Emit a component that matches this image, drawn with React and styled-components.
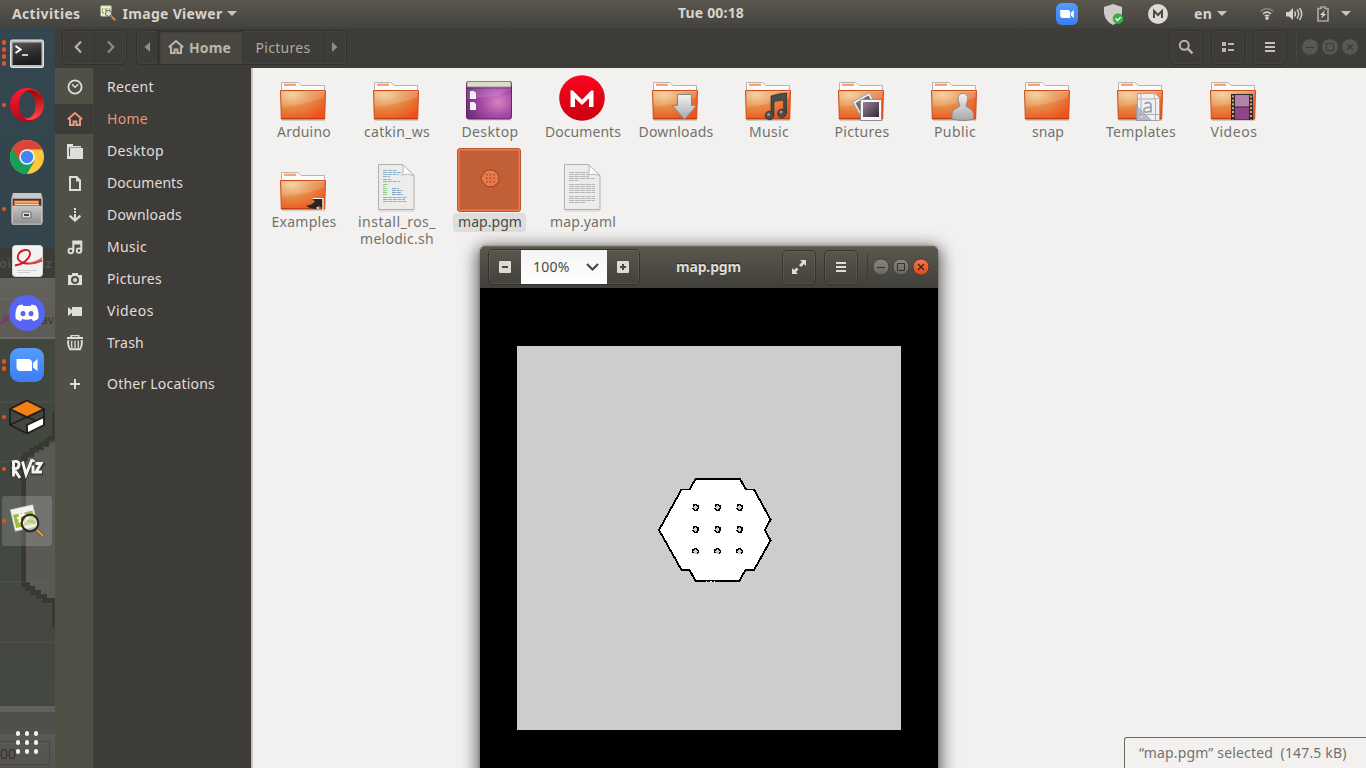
import React from "react";
import styled, { createGlobalStyle, css } from "styled-components";

const FAMILY = '"Noto Sans", "Open Sans", sans-serif';

const Global = createGlobalStyle`
  * { box-sizing: border-box; }
  body { margin: 0; overflow: hidden; font-family: ${FAMILY}; font-size: 14px; }
  svg { display: block; flex: none; }
`;

/* ---------- text with a measured advance ---------- */

const TextSpan = styled.span`
  white-space: pre;
  font-weight: ${(p) => (p.$bold ? 700 : 400)};
`;

const pen = document.createElement("canvas").getContext("2d");
function Text({ children, width, bold, size = 14 }) {
  pen.font = `${bold ? 700 : 400} ${size}px ${FAMILY}`;
  const spacing = (width - pen.measureText(children).width) / children.length;
  return (
    <TextSpan $bold={bold} style={{ letterSpacing: `${spacing.toFixed(3)}px` }}>
      {children}
    </TextSpan>
  );
}

/* ---------- shell ---------- */

const Desktop = styled.div`
  position: relative;
  width: 1366px;
  height: 768px;
  overflow: hidden;
  display: flex;
  flex-direction: column;
  background: #3c3b37;
`;

const TopBar = styled.header`
  height: 27px;
  flex: none;
  display: grid;
  grid-template-columns: 1fr auto 1fr;
  align-items: center;
  padding: 0 15px 0 12px;
  color: #d6d3cc;
  line-height: 26px;
  background: linear-gradient(#5a574e, #44433e);
`;

const Clock = styled.div`
  margin-left: 59px;
  padding-bottom: 1px;
  line-height: 26px;
`;

const BarGroup = styled.div`
  display: flex;
  align-items: center;
  height: 27px;
  justify-content: ${(p) => (p.$end ? "flex-end" : "flex-start")};
`;

const Space = styled.span`
  flex: none;
  width: ${(p) => p.$w}px;
`;

const Main = styled.div`
  flex: 1;
  min-height: 0;
  display: flex;
`;

/* ---------- dock ---------- */

const Dock = styled.nav`
  position: relative;
  width: 55px;
  flex: none;
  display: flex;
  flex-direction: column;
  justify-content: space-between;
  padding-top: 1px;
  overflow: hidden;
  background: linear-gradient(
    #34464f 0, #33444c 221px, #3c3b37 221px, #3c3b37 251px,
    #63625c 251px, #5c5b56 310px, #6a6963 310px, #6a6963 312px,
    #41463f 312px, #444841 679px, #62615c 679px, #62615c 685px,
    #504f4b 685px, #504f4b 707px, #5a5955 707px, #53524e 741px
  );
`;

const Backdrop = styled.svg`
  position: absolute;
  left: 0;
  top: 0;
`;

const Ghost = styled.span`
  position: absolute;
  left: ${(p) => p.$x}px;
  top: ${(p) => p.$y}px;
  font-size: ${(p) => p.$size || 13}px;
  font-weight: ${(p) => (p.$bold ? 700 : 400)};
  line-height: 18px;
  color: ${(p) => p.$color};
  white-space: pre;
`;

const DockList = styled.div`
  display: flex;
  flex-direction: column;
  gap: 2px;
  padding-left: 2px;
`;

const DockItem = styled.div`
  position: relative;
  width: 50px;
  height: 50px;
  display: flex;
  align-items: center;
  justify-content: center;
  border-radius: 3px;
  background: ${(p) => (p.$active ? "rgba(255,255,255,0.16)" : "transparent")};
`;

const Dots = styled.div`
  position: absolute;
  left: 0;
  top: 0;
  height: 50px;
  display: flex;
  flex-direction: column;
  justify-content: center;
  gap: 2.6px;
`;

const Dot = styled.i`
  width: 4.4px;
  height: 4.4px;
  border-radius: 50%;
  background: #e95420;
`;

const AppsButton = styled.div`
  position: relative;
  display: grid;
  grid-template-columns: repeat(3, 4.6px);
  gap: 4.4px;
  padding: 0 0 14px 15.6px;
`;

const AppsDot = styled.i`
  width: 4.6px;
  height: 4.6px;
  border-radius: 50%;
  background: #f4f3f1;
`;

/* ---------- file manager ---------- */

const Files = styled.section`
  flex: 1;
  display: flex;
  flex-direction: column;
  min-width: 0;
`;

const FilesHeader = styled.div`
  height: 41px;
  flex: none;
  display: flex;
  align-items: center;
  padding: 0 7px 2px;
  color: #aeaba1;
  background: #3d3c38;
  border-top: 1px solid #43423e;
`;

const ButtonGroup = styled.div`
  display: flex;
  height: 35px;
  border: 1px solid #31302d;
  border-radius: 5px;
  box-shadow: inset 0 0 0 1px #454440;
  overflow: hidden;
  margin-left: ${(p) => p.$gap || 0}px;
`;

const HeadCell = styled.div`
  width: ${(p) => p.$w}px;
  display: flex;
  align-items: center;
  justify-content: center;
  gap: 5px;
  padding-right: ${(p) => p.$nudge || 0}px;
  border-right: 1px solid #363531;
  &:last-child { border-right: 0; }
  ${(p) =>
    p.$pressed &&
    css`
      background: #484741;
      box-shadow: inset 2px 1px 2px #32312e;
      color: #b9b6ac;
    `}
`;

const Filler = styled.div`
  flex: 1;
`;

const Rule = styled.i`
  width: 1px;
  height: 28px;
  margin: 0 ${(p) => p.$r}px 0 ${(p) => p.$l}px;
  background: ${(p) => p.$color};
`;

const WindowButtons = styled.div`
  display: flex;
  gap: 2px;
`;

const FilesBody = styled.div`
  flex: 1;
  min-height: 0;
  display: flex;
`;

const Sidebar = styled.aside`
  width: 196px;
  flex: none;
  padding-top: 3px;
  color: #e0deda;
  background: linear-gradient(90deg, #505047 38px, #48483f 38px, #3e3c38 39px);
`;

const Place = styled.div`
  height: 32px;
  display: flex;
  align-items: center;
  margin-top: ${(p) => (p.$apart ? 9 : 0)}px;
  color: ${(p) => (p.$active ? "#e9967a" : "inherit")};
`;

const PlaceIcon = styled.div`
  width: 38px;
  height: 30px;
  margin-right: 14px;
  display: flex;
  align-items: center;
  justify-content: center;
  padding: 0 0 1px 2px;
  background: ${(p) => (p.$active ? "#3e3c38" : "transparent")};
`;

const PlaceName = styled.div`
  padding-bottom: 2px;
`;

const Content = styled.main`
  position: relative;
  flex: 1;
  border-left: 2px solid #c9c6c2;
  padding: 4px 0 0 4px;
  background: #f2f1ef;
`;

const IconRow = styled.div`
  display: flex;
  height: ${(p) => p.$h}px;
`;

const FileItem = styled.div`
  width: 93px;
  flex: none;
  display: flex;
  flex-direction: column;
  align-items: center;
  color: #73716e;
`;

const Thumb = styled.div`
  height: ${(p) => p.$h}px;
  display: flex;
  align-items: flex-end;
`;

const Label = styled.div`
  margin-top: 1px;
  padding: 0 4px 0 5px;
  line-height: 17px;
  display: flex;
  flex-direction: column;
  align-items: center;
  border-radius: 4px;
  ${(p) =>
    p.$selected &&
    css`
      color: #4b4a47;
      background: #dededc;
      padding-bottom: 2px;
    `}
`;

const StatusBar = styled.div`
  position: absolute;
  right: 0;
  bottom: 0;
  width: 242px;
  height: 31px;
  padding: 0 0 0 14px;
  line-height: 30px;
  color: #73716e;
  background: #f2f1ef;
  border: solid #6d6b68;
  border-width: 1px 0 0 1px;
  border-radius: 3px 0 0 0;
`;

/* ---------- image viewer ---------- */

const Viewer = styled.section`
  position: absolute;
  left: 480px;
  top: 246px;
  width: 458px;
  height: 530px;
  border-radius: 6px 6px 0 0;
  background: #000;
  box-shadow: 0 4px 16px 4px rgba(0, 0, 0, 0.55), 0 0 3px rgba(0, 0, 0, 0.35);
`;

const ViewerHeader = styled.div`
  height: 42px;
  display: grid;
  grid-template-columns: 1fr auto 1fr;
  align-items: center;
  padding: 0 8px;
  color: #dfdbd2;
  border-radius: 6px 6px 0 0;
  background: linear-gradient(#5b584e, #403f3a);
  box-shadow: inset 0 1px #6d6a60;
`;

const HeaderSide = styled.div`
  display: flex;
  align-items: center;
  justify-content: ${(p) => (p.$end ? "flex-end" : "flex-start")};
`;

const ZoomGroup = styled.div`
  display: flex;
  width: 152px;
  height: 36px;
  border: 1px solid #33322e;
  border-radius: 5px;
  box-shadow: inset 0 0 0 1px rgba(255, 255, 255, 0.08);
`;

const ZoomStep = styled.div`
  width: ${(p) => p.$w}px;
  flex: none;
  display: flex;
  align-items: center;
  justify-content: center;
`;

const ZoomValue = styled.div`
  flex: 1;
  display: flex;
  align-items: center;
  gap: 16px;
  padding: 0 0 1px 12px;
  color: #4a4946;
  background: linear-gradient(#f4f4f3, #fff);
`;

const HeaderButton = styled.div`
  width: 34px;
  height: 35px;
  margin-right: ${(p) => p.$gap}px;
  display: flex;
  align-items: center;
  justify-content: center;
  border: 1px solid ${(p) => (p.$dim ? "#32312e" : "#35342f")};
  border-radius: 5px;
  box-shadow: inset 0 0 0 1px rgba(255, 255, 255, ${(p) => (p.$dim ? 0.04 : 0.07)});
`;

const Title = styled.div`
  padding: 0 1px 2px 0;
  text-shadow: 0 -1px 1px rgba(0, 0, 0, 0.6);
`;

const Canvas = styled.div`
  padding: 58px 0 0 37px;
`;

/* ---------- small glyphs ---------- */

const Caret = ({ w = 10, h = 5 }) => (
  <svg width={w} height={h} viewBox="0 0 10 5"><path d="M0 0h10L5 5z" fill="#c9c6bf" /></svg>
);

const HouseGlyph = ({ size = 16 }) => (
  <svg width={size} height={size} viewBox="0 0 16 16" fill="none" stroke="currentColor">
    <path d="M.8 8.2 8 2l7.2 6.2" strokeWidth="2" />
    <path d="M3 7.5V14h3.6v-3.6h2.8V14H13V7.5" strokeWidth="2" />
  </svg>
);

const SearchGlyph = () => (
  <svg width="16" height="16" viewBox="0 0 16 16" fill="none" stroke="#bbb8ac" strokeWidth="2">
    <circle cx="6.3" cy="6.3" r="4.5" /><path d="m9.7 9.7 4.8 4.6" strokeWidth="2.4" />
  </svg>
);

const ListGlyph = () => (
  <svg width="14" height="12" viewBox="0 0 14 12" fill="#bbb8ac">
    <path d="M1 1h4v4H1zM1 7h4v4H1zM7 2h6v2H7zM7 8h6v2H7z" />
  </svg>
);

const MenuGlyph = ({ color }) => (
  <svg width="10" height="10" viewBox="0 0 10 10" fill={color}>
    <path d="M0 0h10v2H0zM0 4h10v2H0zM0 8h10v2H0z" />
  </svg>
);

const Chevron = ({ flip, color }) => (
  <svg width="8" height="14" viewBox="0 0 8 14" fill="none" stroke={color} strokeWidth="2.2">
    <path d={flip ? "m1 1.5 5.2 5.5L1 12.5" : "M7 1.5 1.8 7 7 12.5"} />
  </svg>
);

const SmallArrow = ({ flip }) => (
  <svg width="6" height="10" viewBox="0 0 6 10" fill="#8f8d85">
    <path d={flip ? "M0 0v10l5.5-5z" : "M6 0v10L.5 5z"} />
  </svg>
);

const RoundButton = ({ kind, tone }) => {
  const palette = {
    dim: ["#5a5954", "#565550", "#3c3b37", "#494843"],
    normal: ["#8a8880", "#66645e", "#33322e", "#3a3935"],
    close: ["#f4794e", "#dd4a1b", "#3e1f12", "#4a3228"],
  }[tone];
  const id = `round-${kind}-${tone}`;
  return (
    <svg width="18" height="18" viewBox="0 0 18 18" fill="none">
      <linearGradient id={id} x2="0" y2="1"><stop stopColor={palette[0]} /><stop offset="1" stopColor={palette[1]} /></linearGradient>
      <circle cx="9" cy="9" r="8" fill={`url(#${id})`} stroke={palette[3]} strokeWidth="0.8" />
      {kind === "min" && <path d="M5 9.5h8" stroke={palette[2]} />}
      {kind === "max" && <path d="M5.5 5.5h7v7h-7z" stroke={palette[2]} />}
      {kind === "close" && <path d="m6 6 6 6m0-6-6 6" stroke={palette[2]} strokeWidth="1.3" />}
    </svg>
  );
};

const placeGlyphs = {
  recent: (
    <><circle cx="8" cy="8" r="6.6" fill="none" stroke="currentColor" strokeWidth="1.8" />
      <path d="m5 5.2 3 3 3.3-3" fill="none" stroke="currentColor" strokeWidth="1.4" /></>
  ),
  desktop: <path d="M0 1h6v2h8v1.4H2V15H0zM3 5h13v11H3z M0 13h3v3H0z" />,
  documents: <path fillRule="evenodd" d="M2 1h8l4 4v11H2zM4 3v11h8V6.6H9V3z" />,
  downloads: (
    <><path d="M7 1h2v2H7zM7 4h2v2H7zM7 7h2v6H7z" />
      <path d="m2.600 8.600 5.400 5 5.400-5" fill="none" stroke="currentColor" strokeWidth="2.200" /></>
  ),
  music: (
    <><path d="M6.300 12.400V2.500h8v9" fill="none" stroke="currentColor" strokeWidth="2" /><path d="M6 2h9v3.500H6z" />
      <circle cx="3.800" cy="12" r="2.300" fill="none" stroke="currentColor" strokeWidth="1.800" />
      <circle cx="12" cy="11.600" r="2.300" fill="none" stroke="currentColor" strokeWidth="1.800" /></>
  ),
  pictures: <path fillRule="evenodd" d="M5 2h6v2h4v10H1V4h4zM8 5a4 4 0 1 0 0 8 4 4 0 0 0 0-8zm0 2a2 2 0 1 1 0 4 2 2 0 0 1 0-4z" />,
  videos: <path d="M6 4h9v9H5V9.800L1 13V4l4 3.200V4z" />,
  trash: (
    <><path d="M3.500 0h9v2H16v2H0V2h3.500zM5 1.200V2h6v-.8z" fillRule="evenodd" />
      <path d="M1.500 5q-1.200 5 1.500 9.200h10q2.700-4.200 1.500-9.200" fill="none" stroke="currentColor" strokeWidth="1.900" />
      <path d="M5 5.500q-1 3.700 0 7.500M8 5.500v7.500M11 5.500q1 3.700 0 7.500" fill="none" stroke="currentColor" strokeWidth="1.300" /></>
  ),
  other: <path d="M7 3h2v4h4v2H9v4H7V9H3V7h4z" />,
};

const PlaceGlyph = ({ kind }) =>
  kind === "home" ? <HouseGlyph /> : (
    <svg width="16" height="16" viewBox="0 0 16 16" fill="currentColor">{placeGlyphs[kind]}</svg>
  );

/* ---------- application icons ---------- */

const ViewerIcon = ({ size }) => (
  <svg width={size} height={size} viewBox="0 0 36 36">
    <g transform="rotate(-13 15 15)">
      <rect x="3.500" y="4" width="23" height="22" fill="#f4f4ee" stroke="#c9c9bd" strokeWidth=".5" />
      <rect x="5" y="9.500" width="20" height="13.500" fill="#9dbb3f" />
      <circle cx="14" cy="15" r="4.500" fill="#fff" strokeDasharray="2 1.500" stroke="#fff" strokeWidth="3" />
      <circle cx="14" cy="15.500" r="2.500" fill="#e98a15" />
    </g>
    <path d="m28 27 6 6" stroke="#6b4a1a" strokeWidth="3.600" /><path d="m28 27 6 6" stroke="#e0a04c" strokeWidth="2" />
    <circle cx="21" cy="20" r="8.300" fill="#eef0e4" fillOpacity=".62" stroke="#2b2c2c" strokeWidth="2.200" />
    <path d="M15 20q4-5 12-2l-1 4q-4-4-11-2z" fill="#a8c154" opacity=".6" />
  </svg>
);

const TrayViewerIcon = () => (
  <svg width="17" height="17" viewBox="0 0 17 17">
    <path d="M1 1h10v10H1z" fill="#eceee2" stroke="#d9dbcd" /><path d="M2 3.500h8v5H2z" fill="#9ab043" />
    <path d="M3 4h2v2h2V4h2v3H7v1H4V7H3z" fill="#f6f6ee" />
    <path d="m12 12 3.500 3.500" stroke="#8d6422" strokeWidth="2.600" /><path d="m11.500 11.500 3.500 3.500" stroke="#d79c3b" strokeWidth="1.200" />
    <circle cx="8.500" cy="8.300" r="3" fill="#e9ecd6" fillOpacity=".7" stroke="#4a4d45" strokeWidth=".9" />
  </svg>
);

const ZoomIcon = ({ size }) => (
  <svg width={size} height={size} viewBox="0 0 34 34">
    <linearGradient id={`zoom${size}`} x2="0" y2="1"><stop stopColor="#559cfb" /><stop offset="1" stopColor="#3d7df3" /></linearGradient>
    <rect width="34" height="34" rx="9" fill={`url(#zoom${size})`} />
    <path d="M6.500 11h11.500q4 0 4 4v8H10.500q-4 0-4-4z" fill="#fff" />
    <path d="m23 15 4.500-4v12L23 19.500z" fill="#fff" />
  </svg>
);

const dockIcons = {
  terminal: (
    <svg width="36" height="36" viewBox="0 0 36 36">
      <linearGradient id="term" x2=".3" y2="1"><stop stopColor="#5b5b5b" /><stop offset=".5" stopColor="#333" /><stop offset="1" stopColor="#1c1c1c" /></linearGradient>
      <g transform="translate(0 2)">
        <rect x="1.500" y="3" width="33" height="27.500" rx="1.500" fill="#bdbdbd" stroke="#e4e4e4" />
        <rect x="3.500" y="5.500" width="29" height="22.500" fill="url(#term)" />
        <path d="m6.500 9 5 3.500-5 3.500" fill="none" stroke="#fff" strokeWidth="2" /><path d="M13 18h6" stroke="#eee" strokeWidth="1.600" />
      </g>
    </svg>
  ),
  opera: (
    <svg width="36" height="36" viewBox="0 0 36 36">
      <linearGradient id="opa" x2="0" y2="1"><stop stopColor="#ff1b2d" /><stop offset="1" stopColor="#b00a1b" /></linearGradient>
      <linearGradient id="opb" x2="0" y2="1"><stop stopColor="#9c0000" /><stop offset="1" stopColor="#ff4b4b" /></linearGradient>
      <path fillRule="evenodd" fill="url(#opa)" d="M18 1a17 17 0 1 0 0 34 17 17 0 0 0 0-34zM18.500 4.500c5 0 8.200 6 8.200 13.500s-3.200 13.500-8.200 13.500S10 26 10 18 13.500 4.500 18.500 4.500z" />
      <path d="M15 5.600C21-1 35 6 35 18S21 37 15 30.400c6 3 11.700-3 11.700-12.400S21 2.600 15 5.600z" fill="url(#opb)" />
    </svg>
  ),
  chrome: (
    <svg width="34" height="34" viewBox="0 0 34 34">
      <circle cx="17" cy="17" r="17" fill="#fdc83b" />
      <path d="M17 17 2.300 8.500A17 17 0 0 0 17 34l7.500-13z" fill="#159f5b" />
      <path d="M2.300 8.500A17 17 0 0 1 32.300 9.500H17L10 21z" fill="#db4537" />
      <circle cx="17" cy="17" r="7.800" fill="#f3f3f3" /><circle cx="17" cy="17" r="6.200" fill="#4384f4" />
    </svg>
  ),
  files: (
    <svg width="34" height="34" viewBox="0 0 34 34">
      <linearGradient id="cab" x2="0" y2="1"><stop stopColor="#c5c5c5" /><stop offset="1" stopColor="#8f8f8f" /></linearGradient>
      <path d="M3 1h28l2 6v23l-1.500 3h-29L1 30V7z" fill="#9b9b9b" />
      <path d="M3 1h28l1 5H2z" fill="#c9c9c9" />
      <rect x="3" y="7" width="28" height="8" fill="#403933" />
      <path d="M4 8.500h25v5H4z" fill="#e86f24" /><path d="M5 10h23M5 12.500h24" stroke="#f7d9b8" strokeWidth="1.200" />
      <rect x="2.500" y="14" width="29" height="18" rx="1" fill="url(#cab)" stroke="#d5d5d5" strokeWidth=".6" />
      <rect x="12" y="20" width="9" height="6" rx=".8" fill="#ddd" stroke="#666" /><path d="M14 23h5" stroke="#444" strokeWidth="2" />
    </svg>
  ),
  reader: (
    <svg width="34" height="34" viewBox="0 0 34 34">
      <rect x="2.500" y="1.500" width="30" height="31" rx="3" fill="#f2f2f2" stroke="#d8d8d8" />
      <path d="M5 21.500c8-1 15-7 15-12 0-6-10-4-12 2-1.500 6 7 12 24 5" fill="none" stroke="#cc1b1e" strokeWidth="1.800" />
      <path d="M15 18q8 2 17-5v4q-9 6-17 1z" fill="#e0484a" opacity=".8" />
      <path d="M7 26.500h20M7 28.500h13" stroke="#cfcfcf" />
    </svg>
  ),
  discord: (
    <svg width="36" height="36" viewBox="0 0 36 36">
      <circle cx="18" cy="18" r="18" fill="#5865f2" />
      <path fill="#fff" fillRule="evenodd" d="M13.500 9.500c-2 .3-3.600.8-4.800 1.500C6.500 15 6 19 6.600 23.500c1.700 1.400 3.400 2.200 5.400 2.600l1.200-2c3 .9 6.600.9 9.600 0l1.200 2c2-.4 3.700-1.200 5.400-2.600.6-4.500.1-8.500-2.100-12.500-1.200-.7-2.800-1.200-4.800-1.500l-.8 1.500h-7.400zM14 16a2.500 2.600 0 1 1 0 5.200 2.500 2.600 0 0 1 0-5.200zm8 0a2.500 2.600 0 1 1 0 5.200 2.500 2.600 0 0 1 0-5.200z" />
    </svg>
  ),
  zoom: <ZoomIcon size={34} />,
  cube: (
    <svg width="36" height="36" viewBox="0 0 36 36" strokeLinejoin="round">
      <path d="M18 1.500 1 10v16l17 8.500L35 26V10L18 18.500 1 10" fill="none" stroke="#231f20" strokeWidth="1.900" />
      <path d="m18 1.500 17 8.500-17 8L1 10z" fill="#f58113" stroke="#231f20" strokeWidth="1.900" />
      <path d="m1 26 17-8 16 7" fill="none" stroke="#231f20" strokeWidth="1.900" />
      <path d="m18 26 17-8v8l-17 8.500z" fill="#fff" stroke="#231f20" strokeWidth="1.900" />
    </svg>
  ),
  rviz: (
    <svg width="36" height="26" viewBox="0 0 36 26" fill="none">
      <g stroke="#262622" strokeWidth="4.500" opacity=".6"><path d="M4 6v15M3 6l7 1 1 5-6 2 7 9M13 6l4 13 6-14M24 10v9M26 9h7l-6 8h7" /></g>
      <g stroke="#f5f5f5" strokeWidth="2.900"><path d="M4.500 5.500v15M3 6q7-2 7 2.500T5 13l6 9M13.500 5.500l3.500 13 6-15M24 9.500v8M26.500 7.500H32l-5 8.500h6" /><path d="m22.500 3.500 3 2" strokeWidth="2" /></g>
    </svg>
  ),
  viewer: <ViewerIcon size={36} />,
};

const dockItems = [
  ["terminal", 4], ["opera", 1], ["chrome", 0], ["files", 1], ["reader", 0],
  ["discord", 0], ["zoom", 2], ["cube", 1], ["rviz", 1], ["viewer", 1, true],
];

/* ---------- file icons ---------- */

const Defs = styled.svg`
  position: absolute;
`;

const FolderDefs = () => (
  <Defs width="0" height="0">
    <defs>
      <radialGradient id="fbody" cx=".25" cy=".15" r=".95">
        <stop stopColor="#f3c68b" /><stop offset=".45" stopColor="#e58d49" /><stop offset="1" stopColor="#ee5119" />
      </radialGradient>
      <linearGradient id="shine" x2="0" y2="1"><stop stopColor="#fff" stopOpacity=".22" /><stop offset="1" stopColor="#fff" stopOpacity=".1" /></linearGradient>
      <linearGradient id="silver" x2="0" y2="1"><stop stopColor="#f2f2f2" /><stop offset="1" stopColor="#a8a8a8" /></linearGradient>
      <radialGradient id="desk" cx=".7" cy=".55" r=".75"><stop stopColor="#d585bf" /><stop offset=".5" stopColor="#a648a7" /><stop offset="1" stopColor="#64307b" /></radialGradient>
      <linearGradient id="mega" x2="0" y2="1"><stop stopColor="#fb0620" /><stop offset="1" stopColor="#cb0010" /></linearGradient>
      <linearGradient id="photo" x2="1" y2="1"><stop stopColor="#9b8292" /><stop offset="1" stopColor="#33273a" /></linearGradient>
    </defs>
  </Defs>
);

const emblems = {
  down: <path d="M26.500 20.500h14v11h5l-12 14-12-14h5z" fill="url(#silver)" stroke="#8a8783" />,
  music: (
    <g fill="#4c4c4c" stroke="#2b2b2b" strokeWidth=".7">
      <path d="M27 22q8-2.500 15.500-3v20h-2.800V26l-9.700 1.500V42H27z" />
      <circle cx="25.500" cy="41.500" r="4.300" /><circle cx="37.800" cy="39.500" r="4.300" />
      <circle cx="24.500" cy="40.500" r="1.500" fill="#999" stroke="none" /><circle cx="37" cy="38" r="1.500" fill="#999" stroke="none" />
    </g>
  ),
  pictures: (
    <><path d="m15.500 28 17-9.500L43 38 26 46z" fill="#eee" stroke="#999" /><path d="m18.500 29 13-7.500 8 15-13 7z" fill="url(#photo)" />
      <path d="M23.500 25.500h21v21h-21z" fill="#f6f6f6" stroke="#8d8d8d" /><path d="M26 28h16v15H26z" fill="url(#photo)" /></>
  ),
  public: (
    <path d="M33 19.500c4 0 5.200 3 4.600 6.800-.4 2.700-1.600 3.700-1.600 5.200 0 2.500 7.500 2.500 7.500 9V45q-5 1.500-10.500 1.500T22 45v-4.500c0-6.500 7.800-6.500 7.800-9 0-1.500-1.200-2.500-1.600-5.200-.6-3.800.8-6.800 4.800-6.800z" fill="url(#silver)" stroke="#8d8a87" />
  ),
  templates: (
    <><path d="M21.500 19.500h17l5 5v22h-22z" fill="#f0f0f0" stroke="#a7a7a7" /><path d="M38.500 19.500v5h5" fill="#fff" stroke="#b5b5b5" />
      <path d="M25 20v22M39.500 26v20M22 25h18M22 40.500h21" stroke="#a9aebb" />
      <path d="M28.500 29.500q6-2.500 6.500 1.500v7.500m0-5q-7-.7-7.200 2.700.2 3.300 7.200.8" fill="none" stroke="#9a9eab" strokeWidth="1.700" />
      <path fillRule="evenodd" d="M20.500 32v14.500h15zM24 39.500l4.500 4.500H24z" fill="#aeb3c1" fillOpacity=".85" stroke="#8b91a1" strokeWidth=".6" /></>
  ),
  videos: (
    <><rect x="22" y="20" width="22" height="26" fill="#2c2a2d" /><rect x="26" y="21" width="14" height="11.500" fill="#b481ad" />
      <rect x="26" y="33.500" width="14" height="12" fill="#90458a" />
      <path d="M24 21.500v24M42 21.500v24" stroke="#e9a06e" strokeWidth="2" strokeDasharray="2 1.900" /></>
  ),
  link: (
    <><path d="M33 34.500h10.500v10.500l-3-3-2.300 2.500q-6 1.500-11.500-3 5 .5 9.300-4z" fill="#2a2421" />
      <path d="M33.500 34.500h10.500V46" fill="none" stroke="#fff" strokeWidth="1.200" /><path d="m37 44 2-1.500 1.500 3" fill="#eee" /></>
  ),
};

const Folder = ({ emblem }) => (
  <svg width="49" height="48" viewBox="0 0 49 48">
    <path d="M3 46.200h43" stroke="#000" strokeOpacity=".15" strokeWidth="1.500" />
    <path d="M2.500 20V8.500h16.500l3 3h23.500V20z" fill="#fbfbfa" stroke="#b7b4b1" />
    <path d="M5 10.800h12" stroke="#f0a070" strokeWidth="2.200" />
    <path d="M1.500 16.500h45l-.8 28.500H2.300z" fill="url(#fbody)" stroke="#c8501c" />
    <path d="M2.500 17.500h43l-.2 6Q25 31 2.500 33z" fill="url(#shine)" />
    <path d="M2 17.500h44" stroke="#f2b58c" strokeWidth=".8" />
    <path d="M2 44.600h44" stroke="#b93a0d" strokeWidth=".9" />
    {emblem && emblems[emblem]}
  </svg>
);

const DesktopIcon = () => (
  <svg width="49" height="48" viewBox="0 0 49 48">
    <path d="M3 46h43" stroke="#000" strokeOpacity=".15" />
    <rect x="1.500" y="7.500" width="45" height="37.500" rx="2" fill="url(#desk)" stroke="#6b1f6c" />
    <path d="M2 13V9q0-1.500 1.500-1.500h41Q46 7.500 46 9v4z" fill="#dedcc8" stroke="#88866c" strokeWidth=".8" />
    <path d="M2 15h44L32 22 2 25z" fill="#fff" opacity=".13" />
    <path d="M5 17h4l2 2v6H5zM5 28h4l2 2v6H5z" fill="#f0eef0" />
  </svg>
);

const MegaIcon = () => (
  <svg width="49" height="50" viewBox="0 0 49 50">
    <circle cx="24" cy="26" r="22.800" fill="url(#mega)" />
    <path d="M12.500 35V18.500h2.300l9.200 9.200 9.200-9.200h2.300V35H31v-8.800l-7 6.800-7-6.800V35z" fill="#fff" />
  </svg>
);

const codeLines = [
  [6, 14, 0], [8, 18, 0], [10, 16, 0], [12, 7, 0], [15, 8, 1], [17, 17, 0], [20, 5, 2], [22, 2, 2], [24, 5, 2], [26, 4, 2],
  [28, 5, 2], [30, 4, 2], [33, 24, 3], [35, 22, 3], [37, 24, 0],
];
const proseLines = [9, 11, 13, 15, 17, 21, 23, 25, 27, 29, 33, 35, 37, 39];

const Page = ({ code }) => (
  <svg width="37" height="48" viewBox="0 0 37 48">
    <path d="M1 47h35" stroke="#000" strokeOpacity=".15" />
    <path d="M.5.500h24L36 11.500v34H.500z" fill="#ececeb" stroke="#b2b0ae" />
    {code
      ? codeLines.map(([y, w, c]) => (
          <path key={y} d={`M5 ${y + 0.5}h${w}`} stroke={["#8fb1c6", "#a99bd0", "#92c993", "#d091b5"][c]} strokeDasharray="4 .8" />
        ))
      : proseLines.map((y) => (
          <path key={y} d={`M5 ${y - 0.5}h${y === 17 ? 9 : y === 39 ? 17 : y < 14 ? 20 : 26}`} stroke="#b9b8b7" strokeDasharray="5 .6" />
        ))}
    <path d="M24.500.500q2 8-1 10.500 6-2 12.500.5z" fill="#fff" stroke="#bbb9b7" />
    {code && <path d="M14 24.500h7M14 26.500h11M14 28.500h9M14 30.500h11" stroke="#79a8c8" strokeDasharray="4 .8" />}
  </svg>
);

const outline =
  "M142 184 164.500 143.500h8l6-10.500h44.500l6 10.500h8L253.500 173.500 248 184l5.500 10.500L237 224h-8.500l-6 10.700h-44L172.500 224h-8z";
const pillars = [161.500, 183.500, 205.500].flatMap((y) => [178.500, 200.500, 222.500].map((x) => [x, y]));

const MapThumb = () => (
  <svg width="65" height="64" viewBox="0 0 65 64">
    <rect x=".5" y=".5" width="63" height="63" rx="2.500" fill="#f07746" stroke="#b9552f" />
    <rect x="2.500" y="2.500" width="59" height="59" fill="#c16037" />
    <g transform="translate(0.700 0.400) scale(0.163)">
      <path d={outline} fill="#f07746" stroke="#833d22" strokeWidth="5" />
      {pillars.map(([x, y]) => <rect key={`${x}-${y}`} x={x - 4} y={y - 4} width="8" height="8" fill="#8d4325" />)}
    </g>
  </svg>
);

const MapImage = () => (
  <svg width="384" height="384" viewBox="0 0 384 384" shapeRendering="crispEdges">
    <rect width="384" height="384" fill="#cdcdcd" />
    <path d={outline} fill="#fff" stroke="#000" strokeWidth="1.900" />
    {pillars.map(([x, y]) => (
      <circle key={`${x}-${y}`} cx={x} cy={y} r="2.800" fill="#cdcdcd" stroke="#000" strokeWidth="1.500" strokeDasharray={y > 200 ? "13 4.600" : "15.800 1.800"} transform={`rotate(${y > 200 ? 145 : 200} ${x} ${y})`} />
    ))}
    <path d="M189 235h1M193 235h2M197 235h1" stroke="#fff" />
  </svg>
);

const rowOne = [
  ["Arduino", 54, <Folder />], ["catkin_ws", 66, <Folder />], ["Desktop", 57, <DesktopIcon />], ["Documents", 76, <MegaIcon />],
  ["Downloads", 75, <Folder emblem="down" />], ["Music", 40, <Folder emblem="music" />], ["Pictures", 55, <Folder emblem="pictures" />],
  ["Public", 42, <Folder emblem="public" />], ["snap", 32, <Folder />], ["Templates", 70, <Folder emblem="templates" />],
  ["Videos", 47, <Folder emblem="videos" />],
];

const places = [
  ["recent", "Recent", 47], ["home", "Home", 41], ["desktop", "Desktop", 57], ["documents", "Documents", 76],
  ["downloads", "Downloads", 75], ["music", "Music", 40], ["pictures", "Pictures", 55], ["videos", "Videos", 47],
  ["trash", "Trash", 37], ["other", "Other Locations", 108],
];

/* ---------- page ---------- */

export default function App() {
  return (
    <Desktop>
      <Global />
      <FolderDefs />
      <TopBar>
        <BarGroup>
          <Text bold width={68.5}>Activities</Text>
          <Space $w={19} />
          <TrayViewerIcon />
          <Space $w={6} />
          <Text bold width={100}>Image Viewer</Text>
          <Space $w={4} />
          <Caret />
        </BarGroup>
        <Clock><Text bold width={66}>Tue 00:18</Text></Clock>
        <BarGroup $end>
          <ZoomIcon size={22} />
          <Space $w={26} />
          <svg width="20" height="22" viewBox="0 0 20 22">
            <path d="M9 1 0 4v6q1 8 9 12 8-4 9-12V4z" fill="#cfcdc9" />
            <circle cx="14" cy="15.500" r="5.300" fill="#35b04a" /><path d="m11.500 15.500 2 2 3.200-3.500" fill="none" stroke="#fff" strokeWidth="1.300" />
          </svg>
          <Space $w={24} />
          <svg width="20" height="20" viewBox="0 0 20 20">
            <circle cx="10" cy="10" r="10" fill="#dedad3" /><path d="M6 14V7l4 4 4-4v7" fill="none" stroke="#4a4843" strokeWidth="2" />
          </svg>
          <Space $w={26} />
          <Text bold width={18}>en</Text>
          <Space $w={5} />
          <Caret />
          <Space $w={33} />
          <svg width="14" height="13" viewBox="0 0 14 13" fill="none">
            <path d="M.7 4.300q6.300-5.400 12.600 0" stroke="#85827b" strokeWidth="1.600" />
            <path d="M3 6.800q4-3.300 8 0M4.800 9.200q2.200-1.800 4.400 0" stroke="#d3d0ca" strokeWidth="1.600" /><circle cx="7" cy="11.300" r="1.700" fill="#d3d0ca" />
          </svg>
          <Space $w={12} />
          <svg width="17" height="14" viewBox="0 0 17 14" fill="none" stroke="#d3d0ca" strokeWidth="1.400">
            <path d="M0 5h3l4-4v12L3 9.500H0z" fill="#d3d0ca" stroke="none" />
            <path d="M8.500 4.500q2 2.500 0 5M11 2.500q3.500 4.500 0 9M13.500 1q4.500 6 0 12" />
          </svg>
          <Space $w={14} />
          <svg width="12" height="16" viewBox="0 0 12 16">
            <path d="M4 1h4v1.500h3V15H1V2.500h3z" fill="none" stroke="#aaa7a0" strokeWidth="1.700" />
            <path d="m8 4-5 5h2.500L4 12.500 9.200 8H6.500z" fill="#dedbd5" />
          </svg>
          <Space $w={12} />
          <Caret />
        </BarGroup>
      </TopBar>

      <Main>
        <Dock>
          <Backdrop width="55" height="741" viewBox="0 27 55 741">
            <path d="M55 442v164l-12-5-17-13V456l14-8z" fill="#5a5954" />
            <path d="M54.500 412v24l-8 5v3h-5v3h-5v3h-5v4h-6v4h-2.500v126h4v4h5v4h6v4h6v4h10v27" fill="none" stroke="#393833" strokeWidth="5" shapeRendering="crispEdges" />
            <path d="M0 324 9 317M3 322l1-5 5-1-2 5z" stroke="#70405f" strokeWidth="2" fill="none" />
            <path d="M0 402h54M0 462h20M0 582h54M0 642h54M0 299h54" stroke="#fff" strokeOpacity=".06" />
            <path d="M-2 741.500h51.500v23H-2" fill="none" stroke="#484743" />
            <path d="M36 452h2M43 447h2M49 443h2" stroke="#38652f" strokeWidth="1.500" />
          </Backdrop>
          <Ghost $x={-1} $y={227} $bold $color="#53514c">oi</Ghost>
          <Ghost $x={34} $y={227} $bold $color="#53514c">viz</Ghost>
          <Ghost $x={41} $y={284} $size={12} $color="#393834">av</Ghost>
          <Ghost $x={0} $y={718} $size={14} $color="#33322e">00</Ghost>
          <DockList>
            {dockItems.map(([name, dots, active]) => (
              <DockItem key={name} $active={active}>
                <Dots>{Array.from({ length: dots }, (_, i) => <Dot key={i} />)}</Dots>
                {dockIcons[name]}
              </DockItem>
            ))}
          </DockList>
          <AppsButton>
            {Array.from({ length: 9 }, (_, i) => <AppsDot key={i} />)}
          </AppsButton>
        </Dock>

        <Files>
          <FilesHeader>
            <ButtonGroup>
              <HeadCell $w={32} $nudge={2}><Chevron color="#b5b2a8" /></HeadCell>
              <HeadCell $w={31}><Chevron flip color="#8b8981" /></HeadCell>
            </ButtonGroup>
            <ButtonGroup $gap={9}>
              <HeadCell $w={21} $nudge={1}><SmallArrow /></HeadCell>
              <HeadCell $w={85} $pressed $nudge={1}><HouseGlyph /><Text bold width={42}>Home</Text></HeadCell>
              <HeadCell $w={81}><Text width={55}>Pictures</Text></HeadCell>
              <HeadCell $w={22}><SmallArrow flip /></HeadCell>
            </ButtonGroup>
            <Filler />
            <HeaderButton $dim $gap={8}><SearchGlyph /></HeaderButton>
            <HeaderButton $dim $gap={8}><ListGlyph /></HeaderButton>
            <HeaderButton $dim $gap={0}><MenuGlyph color="#c5c2b5" /></HeaderButton>
            <Rule $l={9} $r={4} $color="#464540" />
            <WindowButtons>
              <RoundButton kind="min" tone="dim" /><RoundButton kind="max" tone="dim" /><RoundButton kind="close" tone="dim" />
            </WindowButtons>
          </FilesHeader>
          <FilesBody>
            <Sidebar>
              {places.map(([kind, name, width]) => (
                <Place key={kind} $active={kind === "home"} $apart={kind === "other"}>
                  <PlaceIcon $active={kind === "home"}><PlaceGlyph kind={kind} /></PlaceIcon>
                  <PlaceName><Text width={width}>{name}</Text></PlaceName>
                </Place>
              ))}
            </Sidebar>
            <Content>
              <IconRow $h={76}>
                {rowOne.map(([name, width, icon]) => (
                  <FileItem key={name}>
                    <Thumb $h={50}>{icon}</Thumb>
                    <Label><Text width={width}>{name}</Text></Label>
                  </FileItem>
                ))}
              </IconRow>
              <IconRow $h={102}>
                <FileItem>
                  <Thumb $h={64}><Folder emblem="link" /></Thumb>
                  <Label><Text width={65}>Examples</Text></Label>
                </FileItem>
                <FileItem>
                  <Thumb $h={64}><Page code /></Thumb>
                  <Label><Text width={78}>install_ros_</Text><Text width={74}>melodic.sh</Text></Label>
                </FileItem>
                <FileItem>
                  <Thumb $h={64}><MapThumb /></Thumb>
                  <Label $selected><Text width={64}>map.pgm</Text></Label>
                </FileItem>
                <FileItem>
                  <Thumb $h={64}><Page /></Thumb>
                  <Label><Text width={66}>map.yaml</Text></Label>
                </FileItem>
              </IconRow>
              <StatusBar><Text width={207.5}>“map.pgm” selected  (147.5 kB)</Text></StatusBar>
            </Content>
          </FilesBody>
        </Files>
      </Main>

      <Viewer>
        <ViewerHeader>
          <HeaderSide>
            <ZoomGroup>
              <ZoomStep $w={32}>
                <svg width="12" height="12" viewBox="0 0 12 12"><rect width="12" height="12" rx="1" fill="#dfdbd2" /><path d="M3 5h6v2H3z" fill="#4a4842" /></svg>
              </ZoomStep>
              <ZoomValue>
                <Text width={36.5}>100%</Text>
                <svg width="13" height="8" viewBox="0 0 13 8" fill="none"><path d="m1 1 5.500 5.500L12 1" stroke="#4a4946" strokeWidth="2.200" /></svg>
              </ZoomValue>
              <ZoomStep $w={32}>
                <svg width="12" height="12" viewBox="0 0 12 12"><rect width="12" height="12" rx="1" fill="#dfdbd2" /><path d="M3 5h2V3h2v2h2v2H7v2H5V7H3z" fill="#4a4842" /></svg>
              </ZoomStep>
            </ZoomGroup>
          </HeaderSide>
          <Title><Text bold width={65}>map.pgm</Text></Title>
          <HeaderSide $end>
            <HeaderButton $gap={8}>
              <svg width="14" height="14" viewBox="0 0 14 14" fill="#dfdbd2">
                <path d="M8 0h6v6l-2-2-3 3-2-2 3-3zM6 14H0V8l2 2 2.500-2.500 2 2L4 12z" />
              </svg>
            </HeaderButton>
            <HeaderButton $gap={0}><MenuGlyph color="#dfdbd2" /></HeaderButton>
            <Rule $l={9} $r={4} $color="#3c3b36" />
            <WindowButtons>
              <RoundButton kind="min" tone="normal" /><RoundButton kind="max" tone="normal" /><RoundButton kind="close" tone="close" />
            </WindowButtons>
          </HeaderSide>
        </ViewerHeader>
        <Canvas><MapImage /></Canvas>
      </Viewer>
    </Desktop>
  );
}
